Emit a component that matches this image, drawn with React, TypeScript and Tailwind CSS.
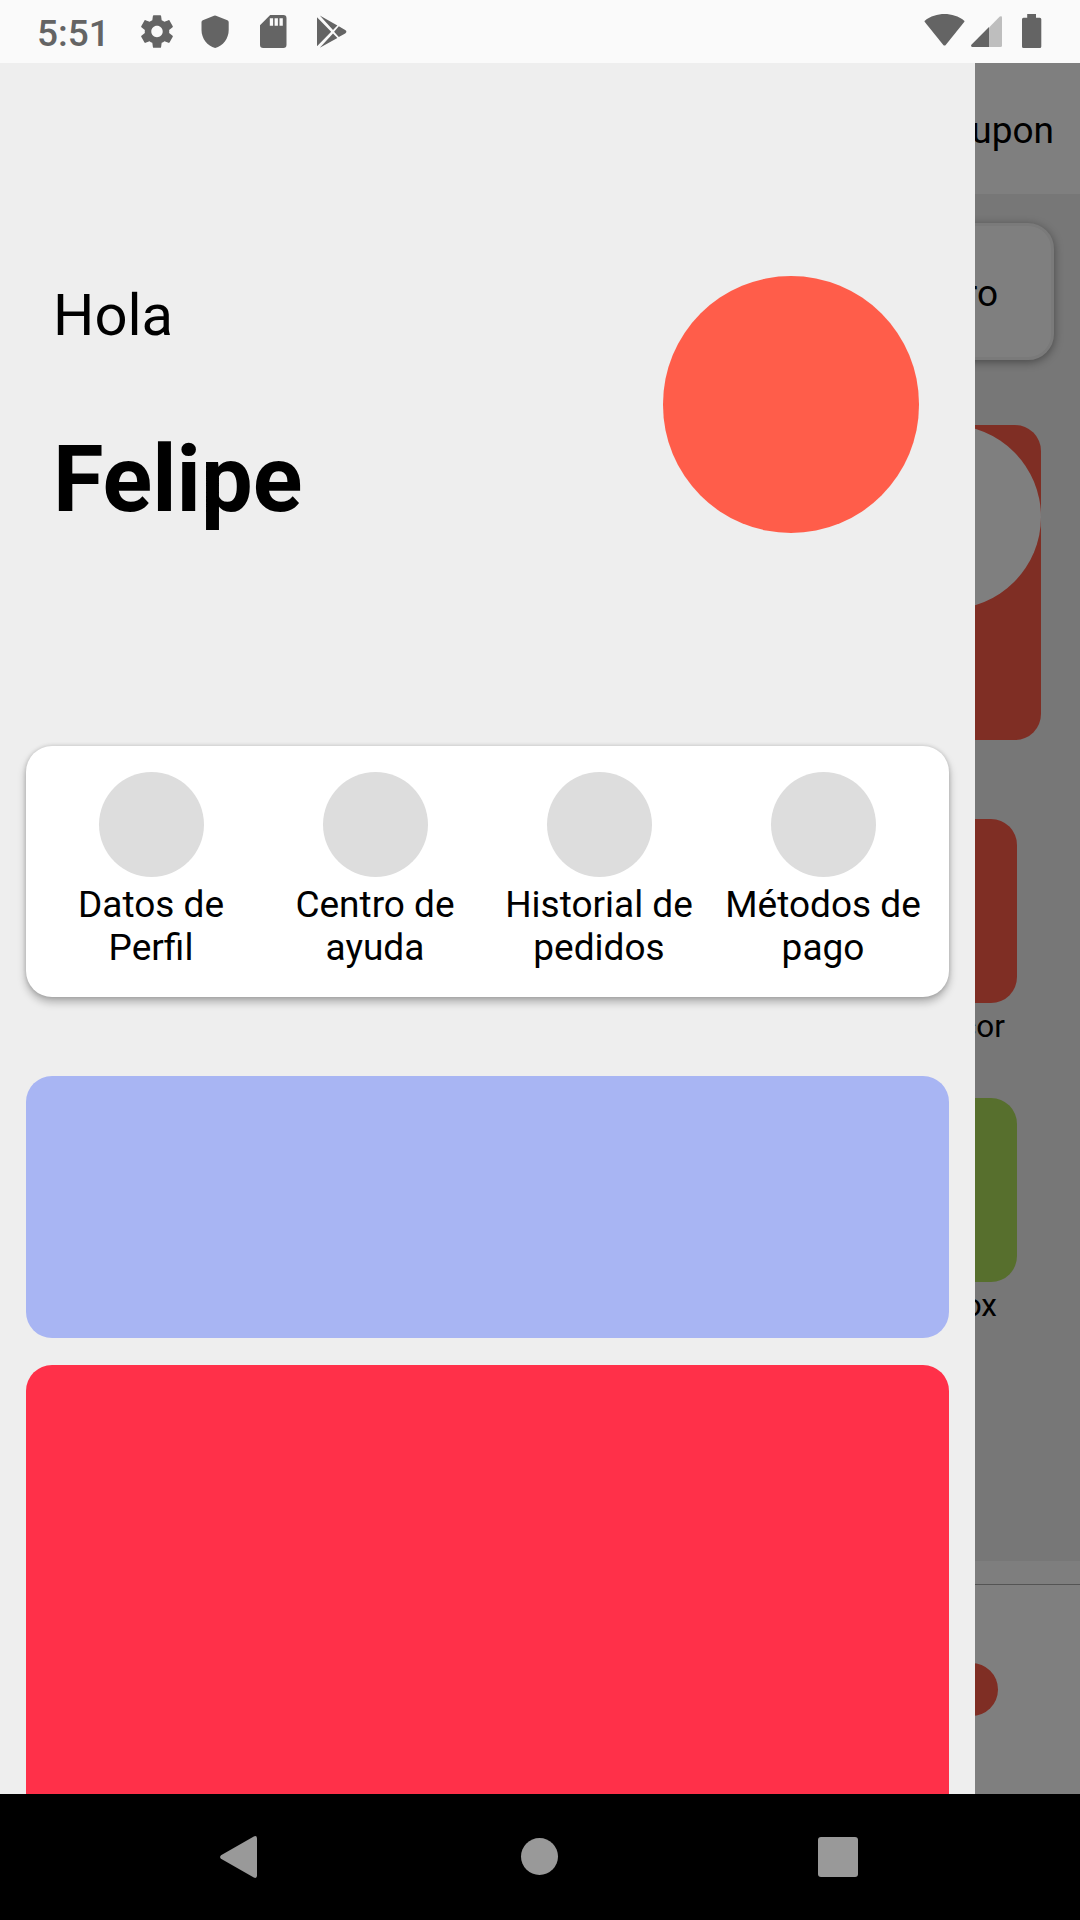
import React from "react";

const shortcuts = [
  ["Datos de", "Perfil"],
  ["Centro de", "ayuda"],
  ["Historial de", "pedidos"],
  ["Métodos de", "pago"],
];

function StatusBar() {
  return (
    <header className="flex h-[63px] shrink-0 items-start bg-[#fafafa] text-[#646464]">
      <span className="ml-[37px] mt-[12px] w-[104px] text-[37px] font-medium leading-[43px]">5:51</span>
      {/* settings */}
      <svg className="mt-[15px]" width="32" height="33" viewBox="2.2 2 19.6 20" fill="currentColor">
        <path d="M19.43 12.98c.04-.32.07-.64.07-.98s-.03-.66-.07-.98l2.11-1.65c.19-.15.24-.42.12-.64l-2-3.46c-.12-.22-.39-.3-.61-.22l-2.49 1c-.52-.4-1.08-.73-1.69-.98l-.38-2.65A.488.488 0 0 0 14 2h-4c-.25 0-.46.18-.49.42l-.38 2.65c-.61.25-1.17.59-1.69.98l-2.49-1c-.23-.09-.49 0-.61.22l-2 3.46c-.13.22-.07.49.12.64l2.11 1.65c-.04.32-.07.65-.07.98s.03.66.07.98l-2.11 1.65c-.19.15-.24.42-.12.64l2 3.46c.12.22.39.3.61.22l2.49-1c.52.4 1.08.73 1.69.98l.38 2.65c.03.24.24.42.49.42h4c.25 0 .46-.18.49-.42l.38-2.65c.61-.25 1.17-.59 1.69-.98l2.49 1c.23.09.49 0 .61-.22l2-3.46c.12-.22.07-.49-.12-.64l-2.11-1.65zM12 15.5c-1.93 0-3.5-1.57-3.5-3.5s1.57-3.5 3.5-3.5 3.5 1.57 3.5 3.5-1.57 3.5-3.5 3.5z" />
      </svg>
      {/* shield */}
      <svg className="ml-[28px] mt-[15px]" width="28" height="34" viewBox="0 0 28 34" fill="currentColor">
        <path d="M13 .8Q14 .2 15 .8L26.4 5.3Q27.7 5.9 27.7 7.2V15C27.7 23.5 22 31 14.2 33.1C6.4 31 .5 23.5 .5 15V7.2Q.5 5.9 1.8 5.3Z" />
      </svg>
      {/* memory card */}
      <svg className="ml-[31px] mt-[15px]" width="27" height="33" viewBox="0 0 27 33" fill="currentColor">
        <path fillRule="evenodd" d="M10.2 0H23.3A3.2 3.2 0 0 1 26.5 3.2V29.8A3.2 3.2 0 0 1 23.3 33H3.2A3.2 3.2 0 0 1 0 29.8V10.2ZM9.8 3.3V10.7H13.1V3.3ZM14.6 3.3V10.7H17.9V3.3ZM19.5 3.3V10.7H22.8V3.3Z" />
      </svg>
      {/* play store */}
      <svg className="ml-[30px] mt-[15px]" width="30" height="34" viewBox="0 0 30 34" fill="currentColor">
        <path d="M0 2.2L14.2 16.7L0 31.2ZM2.8 .6L20.4 10.5L16 15ZM21.8 11.3L28.2 15Q30.6 16.7 28.2 18.4L21.8 22.1L17.1 16.7ZM2.8 32.8L20.4 22.9L16 18.4Z" />
      </svg>
      <div className="ml-auto mr-[38px] flex">
        {/* wifi */}
        <svg className="mt-[14px]" width="42" height="33" viewBox="0 0 42 33" fill="currentColor">
          <path d="M.8 6.7C12-2.1 29-2.1 40.2 6.7Q40.8 7.2 40.2 8L21.5 31.2Q20.5 32 19.5 31.2L.8 8Q.2 7.2.8 6.7Z" />
        </svg>
        {/* mobile signal */}
        <svg className="ml-[5px] mt-[16px]" width="31" height="31" viewBox="0 0 31 31" fill="currentColor">
          <path opacity=".4" d="M18 11.5L28.8.6Q31 -.3 31 1.4V29.5Q31 31 29.5 31H18Z" />
          <path d="M18 11V31H1.2Q-.6 30.3.4 28.8Z" />
        </svg>
        {/* battery */}
        <svg className="ml-[20px] mt-[14px]" width="20" height="34" viewBox="0 0 20 34" fill="currentColor">
          <path d="M5.2 0H14V3.7H17.8Q19.3 3.7 19.3 5.2V32.5Q19.3 34 17.8 34H1.5Q0 34 0 32.5V5.2Q0 3.7 1.5 3.7H5.2Z" />
        </svg>
      </div>
    </header>
  );
}

/* Home screen behind the drawer, dimmed by the scrim. */
function HomeScreen() {
  return (
    <div className="flex h-full flex-col bg-[#eeeeee]">
      <div className="flex h-[131px] shrink-0 justify-end bg-white pr-[26px] pt-[46px] text-[37px] leading-[43px]">
        Cupon
      </div>
      <div className="ml-auto mr-[26px] mt-[29px] flex h-[137px] w-[400px] shrink-0 justify-end rounded-[26px] border-[3px] border-[#f4f4f4] bg-white pr-[53px] pt-[46px] text-[37px] leading-[43px] shadow-[0_2px_10px_rgba(0,0,0,0.4)]">
        Otro
      </div>
      <div className="ml-auto mr-[39px] mt-[65px] h-[315px] w-[400px] shrink-0 overflow-hidden rounded-[26px] bg-[#ff5c49]">
        <div className="ml-auto size-[184px] rounded-full bg-white" />
      </div>
      <div className="ml-auto mr-[63px] mt-[79px] flex w-[184px] shrink-0 flex-col">
        <div className="h-[184px] rounded-[26px] bg-[#ff5c49]" />
        <span className="mt-[5px] pr-[12px] text-right text-[31.5px] leading-[37px]">Licor</span>
        <div className="mt-[53px] h-[184px] rounded-[26px] bg-[#aede5a]" />
        <span className="mt-[5px] pr-[20px] text-right text-[31.5px] leading-[37px]">Box</span>
      </div>
      <div className="mt-auto h-[23px] shrink-0 bg-[#fcfcfc]" />
      <div className="flex h-[210px] shrink-0 justify-end border-t border-[#a8a8a8] bg-white pr-[82px] pt-[78px]">
        <div className="size-[53px] rounded-full bg-[#ff5c49]" />
      </div>
    </div>
  );
}

function Drawer() {
  return (
    <aside className="absolute inset-y-0 left-0 flex w-[975px] flex-col overflow-hidden bg-[#eeeeee] px-[26px]">
      <section className="flex h-[683px] shrink-0 justify-between pl-[27px] pr-[30px]">
        <div className="flex flex-col">
          <p className="mt-[218px] text-[58px] leading-[68px]">Hola</p>
          <h1 className="mt-[77px] text-[92px] font-bold leading-[108px]">Felipe</h1>
        </div>
        <div className="mt-[212.5px] h-[257px] w-[256px] rounded-full bg-[#ff5d4a]" />
      </section>
      <nav className="flex h-[251px] shrink-0 rounded-[26px] bg-white px-[13px] pt-[26px] shadow-[0_5px_9px_rgba(0,0,0,0.28),0_0_4px_rgba(0,0,0,0.16)]">
        {shortcuts.map(([top, bottom]) => (
          <div key={bottom} className="flex w-[224px] shrink-0 flex-col items-center text-[37px] leading-[43px]">
            <div className="mb-[6px] size-[105px] rounded-full bg-[#dddddd]" />
            <span className="whitespace-nowrap">{top}</span>
            <span>{bottom}</span>
          </div>
        ))}
      </nav>
      <div className="mt-[79px] h-[262px] shrink-0 rounded-[26px] bg-[#a8b5f3]" />
      <div className="mt-[27px] h-[525px] shrink-0 rounded-[26px] bg-[#ff3049]" />
    </aside>
  );
}

function NavigationBar() {
  return (
    <footer className="flex h-[126px] shrink-0 items-start bg-black text-[#999999]">
      <svg className="ml-[219px] mt-[42px]" width="38" height="42" viewBox="0 0 38 42" fill="currentColor">
        <path d="M2 19.2L34.8.5Q37.8-.8 38 2.2V39.8Q37.8 42.8 34.8 41.5L2 22.8Q.2 21 2 19.2Z" />
      </svg>
      <div className="ml-[264px] mt-[44px] size-[37px] rounded-full bg-[#999999]" />
      <div className="ml-[260px] mt-[43px] size-[40px] rounded-[3px] bg-[#999999]" />
    </footer>
  );
}

export default function App() {
  return (
    <div className="flex h-[1920px] w-[1080px] flex-col overflow-hidden font-[Roboto,sans-serif] text-black">
      <StatusBar />
      <main className="relative min-h-0 flex-1 overflow-hidden">
        <HomeScreen />
        <div className="absolute inset-0 bg-black/50" />
        <Drawer />
      </main>
      <NavigationBar />
    </div>
  );
}
